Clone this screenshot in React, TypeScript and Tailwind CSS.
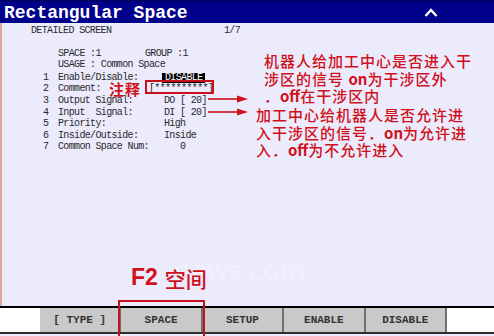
import React from 'react';

const mono = { fontFamily: '"Liberation Mono", "Courier New", monospace' };
const cjk = { fontFamily: '"Noto Sans CJK SC", sans-serif' };

const rows = [
  { n: '1', label: 'Enable/Disable:', value: 'DISABLE', hl: true },
  { n: '2', label: 'Comment:', value: '[**********]', wide: true },
  { n: '3', label: 'Output Signal:', value: 'DO [ 20]' },
  { n: '4', label: 'Input  Signal:', value: 'DI [ 20]' },
  { n: '5', label: 'Priority:', value: 'High' },
  { n: '6', label: 'Inside/Outside:', value: 'Inside' },
  { n: '7', label: 'Common Space Num:', value: '   0' },
];

const keys = ['[ TYPE ]', 'SPACE', 'SETUP', 'ENABLE', 'DISABLE'];

const Arrow: React.FC<{ className: string }> = ({ className }) => (
  <svg className={className} width="40" height="8" viewBox="0 0 40 8">
    <line x1="0" y1="4" x2="31" y2="4" stroke="#d0101a" strokeWidth="1.6" />
    <polygon points="29,0.5 40,4 29,7.5" fill="#d0101a" />
  </svg>
);

const App: React.FC = () => {
  return (
    <div
      className="relative w-[494px] h-[336px] overflow-hidden bg-[#ebebfc] flex flex-col"
      style={mono}
    >
      {/* Title bar */}
      <div className="h-[23px] bg-[#00008a] border-t-2 border-[#00006a] flex items-center justify-between pl-[4px] pr-[56px]">
        <span className="text-white font-bold text-[18px] leading-none">Rectangular Space</span>
        <svg width="14" height="9" viewBox="0 0 14 9">
          <polyline points="1.5,8 7,2 12.5,8" fill="none" stroke="white" strokeWidth="2.4" />
        </svg>
      </div>

      {/* Body */}
      <div className="relative h-[283px] border-l-2 border-[#d9ab9c] pt-[2px] text-[10px] tracking-[-0.65px] leading-[11.6px] text-[#2a2a2a]">
        <div className="flex pl-[29px] w-[238px] justify-between">
          <span>DETAILED SCREEN</span>
          <span>1/7</span>
        </div>
        <div className="h-[11px]" />
        <div className="flex pl-[56px]">
          <span className="w-[87px]">SPACE :1</span>
          <span>GROUP :1</span>
        </div>
        <div className="pl-[56px]">USAGE : Common Space</div>
        <div className="flex flex-col pt-[1px]">
          {rows.map((r) => (
            <div key={r.n} className="flex items-center h-[11.6px]">
              <span className="w-[56px] pl-[41px]">{r.n}</span>
              <span className={(r.wide ? 'w-[89px]' : 'w-[104px]') + ' whitespace-pre'}>{r.label}</span>
              {r.hl ? (
                <span className="bg-black text-white px-[3px] h-[10px] leading-[10px]">{r.value}</span>
              ) : (
                <span className="whitespace-pre pl-[2px]">{r.value}</span>
              )}
            </div>
          ))}
        </div>

        {/* Annotations */}
        <div
          className="absolute left-[107px] top-[58px] text-[15px] leading-none font-bold text-[#d0101a] tracking-[1px]"
          style={cjk}
        >
          注释
        </div>
        <div className="absolute left-[143px] top-[57px] w-[69px] h-[14px] border-2 border-[#c8101a]" />
        <Arrow className="absolute left-[206px] top-[72px]" />
        <Arrow className="absolute left-[206px] top-[85px]" />

        <div
          className="absolute left-[262px] top-[29px] text-[15px] leading-[17.5px] font-medium text-[#d0101a] tracking-[1px] whitespace-pre"
          style={cjk}
        >
          <div>机器人给加工中心是否进入干</div>
          <div>
            涉区的信号 <b className="font-bold tracking-normal">on</b>为干涉区外
          </div>
          <div>
            ．<b className="font-bold tracking-normal">off</b>在干涉区内
          </div>
        </div>
        <div
          className="absolute left-[254px] top-[83px] text-[15px] leading-[17.5px] font-medium text-[#d0101a] tracking-[1px] whitespace-pre"
          style={cjk}
        >
          <div>加工中心给机器人是否允许进</div>
          <div>
            入干涉区的信号．<b className="font-bold tracking-normal">on</b>为允许进
          </div>
          <div>
            入．<b className="font-bold tracking-normal">off</b>为不允许进入
          </div>
        </div>

        <div
          className="absolute left-[172px] top-[232px] text-[28px] leading-none text-white/30 tracking-normal"
          style={{ fontFamily: '"Open Sans", sans-serif' }}
        >
          news.com
        </div>

        <div
          className="absolute left-[129px] top-[243px] flex items-end gap-[7px] text-[#d0101a] tracking-normal leading-none"
          style={{ fontFamily: '"Liberation Sans", "Noto Sans CJK SC", sans-serif' }}
        >
          <span className="text-[23px] font-bold">F2</span>
          <span className="text-[21px] font-medium" style={cjk}>
            空间
          </span>
        </div>
      </div>

      {/* Function key bar */}
      <div className="h-[2px] bg-black" />
      <div className="flex h-[26px] bg-white border-b-2 border-[#303030]">
        <div className="w-[40px]" />
        {keys.map((k) => (
          <div
            key={k}
            className="w-[81.4px] flex items-center justify-center bg-[#c9c9c9] border-r-2 border-[#6e6e6e] text-[11px] font-bold text-[#333] whitespace-pre"
          >
            {k}
          </div>
        ))}
        <div className="flex-1" />
      </div>

      <div className="absolute left-[118px] top-[300px] w-[87px] h-[38px] border-2 border-[#c8101a]" />
    </div>
  );
};

export default App;
